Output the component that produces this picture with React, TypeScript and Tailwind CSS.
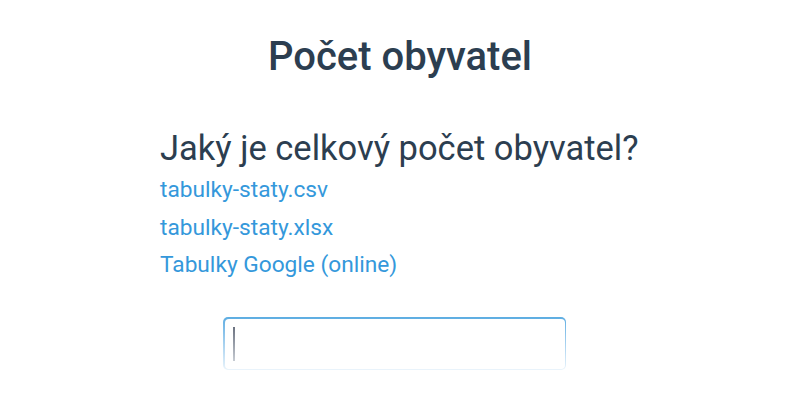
export default function App() {
  const links = ['tabulky-staty.csv', 'tabulky-staty.xlsx', 'Tabulky Google (online)'];

  return (
    <div className="w-[800px] h-[400px] bg-white font-['Roboto',sans-serif] text-[#2c3e50] overflow-hidden">
      <h1 className="pt-[33px] text-center text-[40px] leading-[48px] font-medium">Počet obyvatel</h1>

      <div className="w-[480px] mx-auto mt-[47px]">
        <h2 className="text-[34.5px] leading-[40px] font-normal">Jaký je celkový počet obyvatel?</h2>
        <ul className="mt-[8px] flex flex-col gap-[9.5px]">
          {links.map((l) => (
            <li key={l} className="h-[28px] leading-[28px]">
              <a href="#" className="text-[22.7px] leading-[28px] text-[#3498db]">
                {l}
              </a>
            </li>
          ))}
        </ul>

        <div className="mt-[38px] ml-[63px] w-[343px] h-[53px] rounded-[5px] p-[1.5px] bg-gradient-to-b from-[#5dade2] to-[#eaf4fb]">
          <div className="w-full h-full rounded-[4px] bg-white flex items-center pl-[8px]">
            <span className="block w-[2px] h-[34px] bg-gradient-to-b from-[#6b7280] to-[#c7ccd3]" />
          </div>
        </div>
      </div>
    </div>
  );
}
